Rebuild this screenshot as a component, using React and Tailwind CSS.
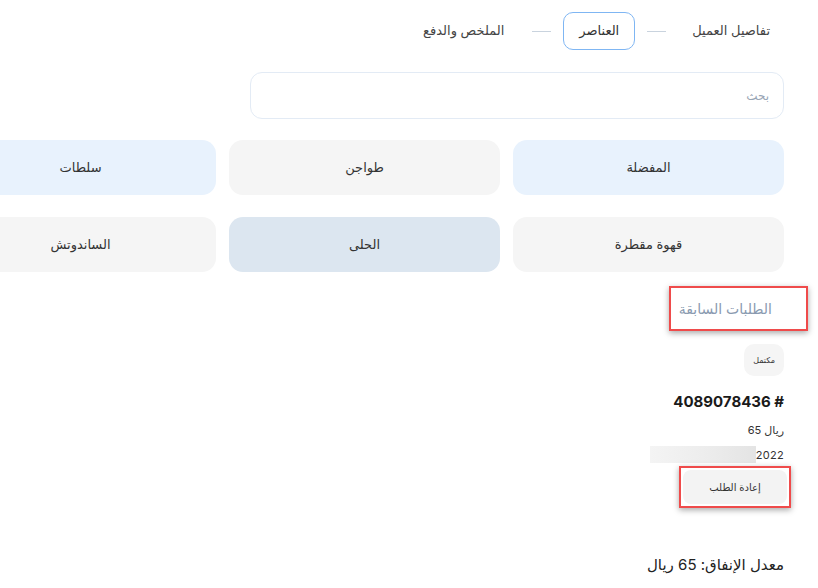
import React from 'react';

const categories = [
    { name: 'المفضلة', tone: 'bg-[#e8f2fd]' },
    { name: 'طواجن', tone: 'bg-[#f5f5f5]' },
    { name: 'سلطات', tone: 'bg-[#e8f2fd]' },
    { name: 'قهوة مقطرة', tone: 'bg-[#f5f5f5]' },
    { name: 'الحلى', tone: 'bg-[#dce6f0]' },
    { name: 'الساندوتش', tone: 'bg-[#f5f5f5]' },
];

const App = () => {
    return (
        <div
            dir="rtl"
            className="w-[818px] h-[588px] overflow-hidden bg-white text-[#222] font-['Inter','DejaVu_Sans',sans-serif]"
        >
            <div className="pr-[34px] pt-3">
                {/* Stepper */}
                <div className="flex items-center h-[38px] pr-[14px]">
                    <div className="pl-[26px] text-[13px] text-[#444]">تفاصيل العميل</div>
                    <div className="w-[19px] h-px bg-[#c9d3de]" />
                    <div className="h-[38px] mx-[12px] px-[15px] flex items-center rounded-[10px] border border-[#7fb6f3] text-[13px] text-[#333]">
                        العناصر
                    </div>
                    <div className="w-[19px] h-px bg-[#c9d3de]" />
                    <div className="pr-[28px] text-[13px] text-[#444]">الملخص والدفع</div>
                </div>

                {/* Search */}
                <div className="mt-[22px] w-[534px] h-[47px] rounded-[12px] border border-[#e3ebf5] flex items-center pr-[14px] text-[12px] text-[#98a5b5]">
                    بحث
                </div>

                {/* Categories */}
                <div className="mt-[21px] grid grid-cols-[271px_271px_271px] gap-x-[13px] gap-y-[22px] w-max">
                    {categories.map((c) => (
                        <div
                            key={c.name}
                            className={`${c.tone} h-[55px] rounded-[14px] flex items-center justify-center text-[13px] text-[#333]`}
                        >
                            {c.name}
                        </div>
                    ))}
                </div>

                {/* Previous orders */}
                <div className="mt-[14px] flex flex-col items-start">
                    <div className="mr-[-24px] pr-[34px] pl-[8px] h-[45px] flex items-center border-2 border-[#ef4b4b] shadow-[0_2px_6px_rgba(0,0,0,0.35)] text-[14px] text-[#8a9ab0]">
                        الطلبات السابقة
                    </div>

                    <div className="mt-[13px] h-[32px] px-[9px] rounded-[10px] bg-[#f5f5f5] flex items-center text-[8px] text-[#333]">
                        مكتمل
                    </div>

                    <div dir="ltr" className="mt-[16px] text-[15px] leading-[20px] font-bold text-[#1a1a1a]">
                        4089078436 #
                    </div>
                    <div dir="ltr" className="mt-[11px] text-[11px] leading-[14px] text-[#333]">
                        65 ريال
                    </div>
                    <div className="mt-[9px] flex items-center">
                        <span className="text-[11px] leading-[14px] tracking-wide text-[#333]">2022</span>
                        <div className="w-[106px] h-[17px] bg-gradient-to-l from-[#e4e4e4] via-[#ededed] to-[#f4f4f4]" />
                    </div>

                    <div className="mt-[3px] mr-[-7px] p-[2px] border-2 border-[#ef4b4b] shadow-[0_2px_6px_rgba(0,0,0,0.35)]">
                        <div className="h-[34px] w-[104px] rounded-[8px] bg-[#f3f3f3] flex items-center justify-center text-[10px] text-[#333]">
                            إعادة الطلب
                        </div>
                    </div>

                    <div className="mt-[47px] text-[15px] leading-[20px] text-[#222]">معدل الإنفاق: 65 ريال</div>
                </div>
            </div>
        </div>
    );
};

export default App;
